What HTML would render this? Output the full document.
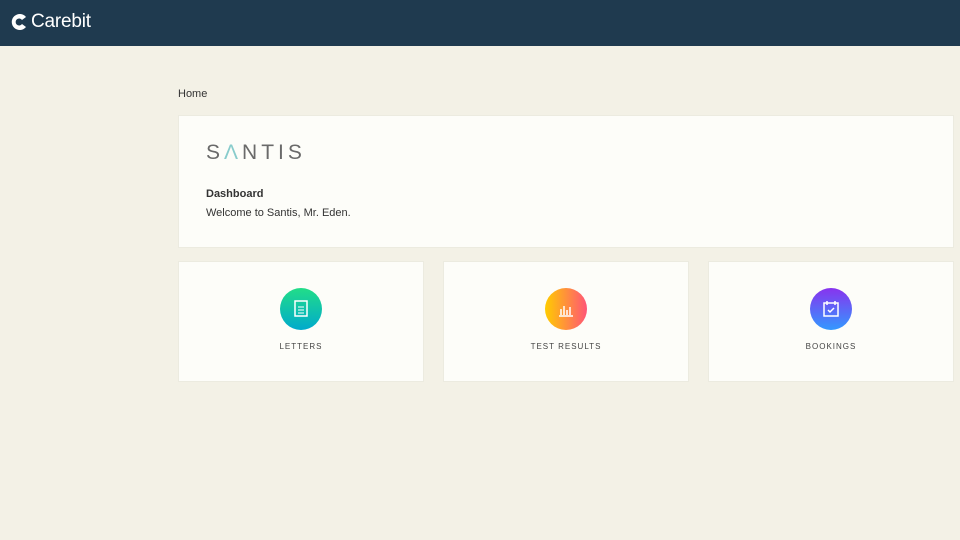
<!DOCTYPE html>
<html><head><style>
*{margin:0;padding:0;box-sizing:border-box}
body{width:960px;height:540px;background:#f3f1e6;font-family:"Liberation Sans",sans-serif;position:relative;overflow:hidden}
.hdr{position:absolute;left:0;top:0;width:960px;height:46px;background:#1f3a4f}
.logo{position:absolute;left:31px;top:11px;color:#fff;font-size:19px;font-weight:normal;letter-spacing:-0.2px}
.home{position:absolute;left:178px;top:88px;font-size:11px;color:#333}
.card{position:absolute;background:#fdfdf9;border:1px solid #ecebe0}
.santis{position:absolute;left:27px;top:25px;font-size:21px;letter-spacing:4px;color:#6a6a6a;font-weight:normal}
.dash{position:absolute;left:27px;top:72px;font-size:11px;font-weight:bold;color:#333}
.wel{position:absolute;left:27px;top:91px;font-size:11px;color:#333}
.ic{position:absolute;left:101px;top:26px;width:42px;height:42px;border-radius:50%}
.lbl{position:absolute;left:0;right:0;top:80px;text-align:center;font-size:8px;letter-spacing:1px;color:#444}
</style></head><body>
<div class="hdr"><svg style="position:absolute;left:10px;top:12px" width="20" height="20" viewBox="0 0 20 20"><path d="M16 5A8 8 0 1 0 16 15L12 12A3.5 3.5 0 1 1 12 8Z" fill="#fff"/></svg><div class="logo">Carebit</div></div>
<div class="home">Home</div>
<div class="card" style="left:178px;top:115px;width:776px;height:133px">
<div class="santis">S<span style="color:#8cc">&Lambda;</span>NTIS</div>
<div class="dash">Dashboard</div>
<div class="wel">Welcome to Santis, Mr. Eden.</div>
</div>
<div class="card" style="left:178px;top:261px;width:246px;height:121px">
<div class="ic" style="background:linear-gradient(#22dd88,#00aacc)"><svg width="42" height="42"><rect x="15" y="13" width="12" height="15" fill="none" stroke="#fff" stroke-width="1.5"/><path d="M18 19h6M18 22h6M18 25h6" stroke="#fff"/></svg></div>
<div class="lbl">LETTERS</div></div>
<div class="card" style="left:443px;top:261px;width:246px;height:121px">
<div class="ic" style="left:101px;background:linear-gradient(90deg,#ffcc00,#ff5577)"><svg width="42" height="42"><path d="M14 28h14M16 27v-6M19 27v-9M22 27v-5M25 27v-8" stroke="#fff" stroke-width="1.5"/></svg></div>
<div class="lbl">TEST RESULTS</div></div>
<div class="card" style="left:708px;top:261px;width:246px;height:121px">
<div class="ic" style="background:linear-gradient(#8833ee,#3399ff)"><svg width="42" height="42"><rect x="14" y="15" width="14" height="13" fill="none" stroke="#fff" stroke-width="1.5"/><path d="M17 13v4M25 13v4M18 22l2 2 4-4" stroke="#fff" stroke-width="1.5" fill="none"/></svg></div>
<div class="lbl">BOOKINGS</div></div>
</body></html>
